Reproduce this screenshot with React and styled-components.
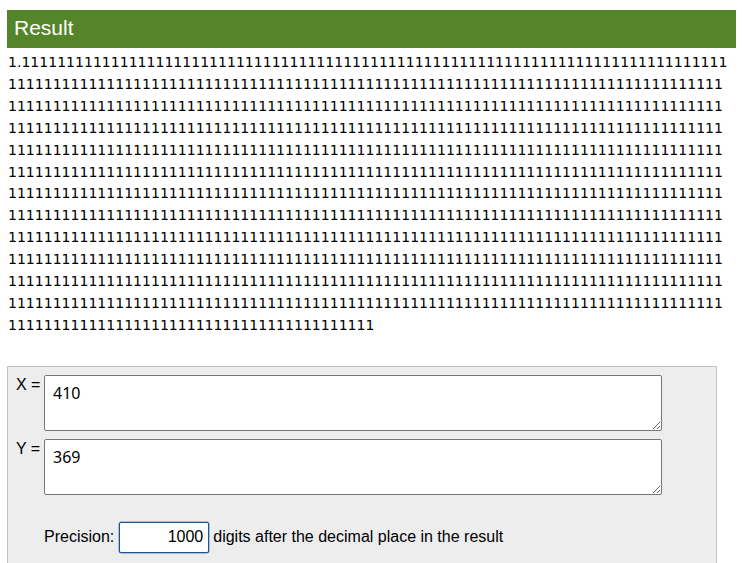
import React from 'react';
import styled, { createGlobalStyle } from 'styled-components';

const GlobalStyle = createGlobalStyle`
    body {
        margin: 8px 8px 0 7px;
        font-family: "Liberation Sans", Arial, sans-serif;
        font-size: 16px;
        color: #000;
        background: #fff;
    }
`;

const digits = '1.' + '1'.repeat(1000);

const App = () => {
    return (
        <Page>
            <GlobalStyle />
            <Header>Result</Header>
            <ResultText>{digits}</ResultText>
            <Panel>
                <Fields>
                    <Label>X =</Label>
                    <Area defaultValue="410" />
                    <Label>Y =</Label>
                    <Area defaultValue="369" />
                </Fields>
                <PrecisionRow>
                    <span>Precision:</span>
                    <NumberInput type="text" defaultValue="1000" />
                    <span>digits after the decimal place in the result</span>
                </PrecisionRow>
            </Panel>
        </Page>
    );
};

const Page = styled.div`
    width: 729px;
`;

const Header = styled.div`
    background-color: #548629;
    color: #fff;
    font-size: 21px;
    height: 38px;
    line-height: 36px;
    padding: 0 7px;
    margin-top: 2px;
`;

const ResultText = styled.div`
    font-family: "DejaVu Sans", sans-serif;
    font-size: 14.06px;
    line-height: 21.9px;
    word-break: break-all;
    margin: 4px 0 0 1px;
    width: 722px;
`;

const Panel = styled.div`
    margin-top: 29px;
    width: 700px;
    background-color: #ededed;
    border: 1px solid #c3c3c3;
    padding: 8px 0 40px 8px;
`;

const Fields = styled.div`
    display: grid;
    grid-template-columns: 28px 618px;
    row-gap: 8px;
`;

const Label = styled.div`
    padding-top: 1px;
    line-height: 18px;
`;

const Area = styled.textarea`
    box-sizing: border-box;
    width: 618px;
    height: 56px;
    padding: 7px 8px;
    font-family: "Noto Sans", sans-serif;
    font-size: 16px;
    line-height: 20px;
    color: #000;
    border: 1px solid #767676;
    border-radius: 2px;
    background: #fff;
    margin: 0;
`;

const PrecisionRow = styled.div`
    display: flex;
    align-items: center;
    margin: 27px 0 0 28px;
`;

const NumberInput = styled.input`
    box-sizing: border-box;
    width: 90px;
    height: 31px;
    margin: 0 4px 0 5px;
    text-align: right;
    font-family: "Liberation Sans", Arial, sans-serif;
    font-size: 16px;
    padding: 0 5px;
    border: 1px solid #1f5394;
    border-radius: 2px;
    box-shadow: 0 0 0 0.5px #6a8fc0;
    background: #fff;
    outline: none;
`;

export default App;
